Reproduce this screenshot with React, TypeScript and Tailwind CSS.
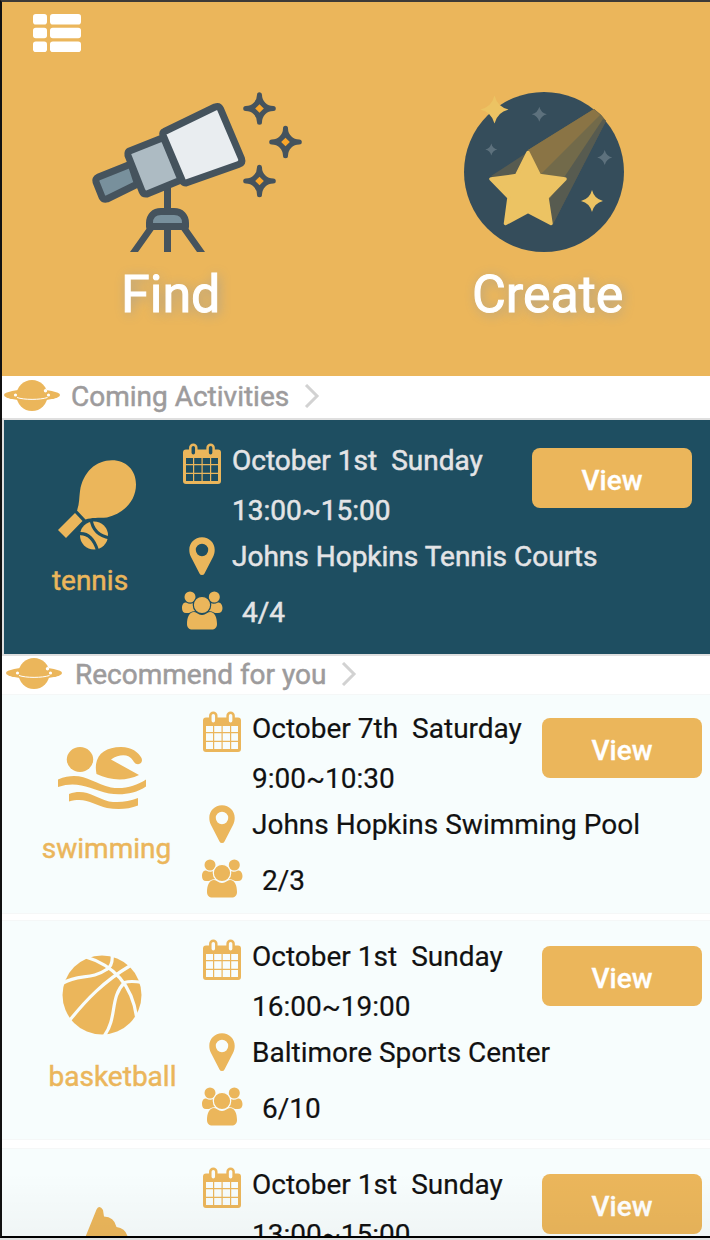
import type { ReactNode } from "react";

type Activity = {
  date: string;
  day: string;
  time: string;
  place?: string;
  count?: string;
};

function MenuIcon() {
  return (
    <svg className="block h-[38px] w-12 fill-white" viewBox="0 0 48 38">
      {[0, 13.8, 27.5].map((y) => (
        <g key={y}>
          <rect x="0" y={y} width="14" height="10.5" rx="2.8" />
          <rect x="17" y={y} width="31" height="10.5" rx="2.8" />
        </g>
      ))}
    </svg>
  );
}

function Spark({ x, y }: { x: number; y: number }) {
  return (
    <g transform={`translate(${x} ${y})`}>
      <path
        d="M0-13.800C0-6 -6 0 -13.800 0C-6 0 0 6 0 13.800C0 6 6 0 13.800 0C6 0 0-6 0-13.800Z"
        fill="#45535d"
        stroke="#45535d"
        strokeWidth="5"
        strokeLinejoin="round"
      />
      <path d="M0-4.300L4.300 0L0 4.300L-4.300 0Z" fill="#f9a62b" />
    </g>
  );
}

function TelescopeIcon() {
  return (
    <svg className="block h-[164px] w-[214px] shrink-0" viewBox="90 90 214 164">
      <path d="M147 228H155L138 252H130ZM180 228H188L205 252H197Z" fill="#45535d" />
      <g stroke="#45535d" strokeWidth="7" strokeLinejoin="round">
        <path d="M167.5 184V252" />
        <path d="M149.5 226.5V223C149.5 216 154 211.500 161 211.500H174C181 211.500 185.500 216 185.500 223V226.500Z" fill="#78909c" />
        <path d="M98.500 177L131 164L137.500 184L107 199Q104 200 102 197L96 182Q95 179 98.500 177Z" fill="#78909c" />
        <path d="M129.500 151L163.500 137.500L181 180L147 194Q143.500 194.500 142 191L128 155.500Q127.500 152 129.500 151Z" fill="#adbbc3" />
        <path d="M164.500 131.500L215 107Q219 105.500 220.500 109L241.500 158.500Q243 163 238.500 164.500L186 183Q183.500 183 182.500 181L163 135Q162 132.500 164.500 131.500Z" fill="#e9edf0" />
      </g>
      <Spark x={259.500} y={108.500} />
      <Spark x={285.500} y={142} />
      <Spark x={259.500} y={181} />
    </svg>
  );
}

function TinyStar({ x, y, r, fill }: { x: number; y: number; r: number; fill: string }) {
  return (
    <path
      transform={`translate(${x} ${y}) scale(${r})`}
      d="M0-1Q.2-.2 1 0Q.2.2 0 1Q-.2.2-1 0Q-.2-.2 0-1Z"
      fill={fill}
    />
  );
}

function ShootingStarIcon() {
  return (
    <svg className="block size-40 shrink-0" viewBox="464 92 160 160">
      <circle cx="544" cy="172" r="80" fill="#354d5b" />
      <path d="M491 176L594 109Q601 114 606 121L553 224Z" fill="#575b50" />
      <path d="M528 150L594 109Q601 114 606 121L550 202Z" fill="#726a4a" />
      <path d="M541 174L528 150L594 109L600 115Z" fill="#8a7445" />
      <path d="M553 224L549 200L603 119L606 121Z" fill="#575b50" />
      <path
        d="M528 152.500L539.500 175.500L565 179L547 197.500L551 223.500L528 211.500L505.500 223.500L509 197.500L491 179L516.500 175.500Z"
        fill="#ecc363"
        stroke="#ecc363"
        strokeWidth="3.500"
        strokeLinejoin="round"
      />
      <TinyStar x={494.500} y={109.500} r={14} fill="#ecc363" />
      <TinyStar x={592} y={201} r={11} fill="#ecc363" />
      <TinyStar x={539.300} y={114.300} r={7.500} fill="#5d717d" />
      <TinyStar x={491.300} y={149.500} r={6} fill="#5d717d" />
      <TinyStar x={604.700} y={157.500} r={7.500} fill="#5d717d" />
    </svg>
  );
}

function PlanetIcon() {
  return (
    <svg className="block h-8 w-14" viewBox="0 0 56 32">
      <ellipse cx="28" cy="15" rx="28" ry="5.800" fill="#ebb65b" />
      <circle cx="28" cy="15.500" r="15.500" fill="#ebb65b" />
      <path d="M13 17.500C20 20 36 20 43.500 17.500" fill="none" stroke="#fff" strokeWidth="1" />
      <g fill="#fff">
        <circle cx="11.500" cy="15" r="1.600" />
        <circle cx="44.500" cy="15" r="1.600" />
        <circle cx="41.500" cy="10.800" r="1.700" />
        <circle cx="42.500" cy="8.300" r=".8" />
      </g>
    </svg>
  );
}

function SectionHeader({ title, className, titleClass }: { title: string; className: string; titleClass: string }) {
  return (
    <div className={`flex items-center bg-white ${className}`}>
      <PlanetIcon />
      <h2 className={`pt-0.5 text-[28px] leading-8 text-[#9d9b9c] [-webkit-text-stroke:0.5px_#9d9b9c] ${titleClass}`}>{title}</h2>
      <svg className="ml-[15px] block h-6 w-4 fill-none stroke-[#d2d2d2] stroke-3" viewBox="0 0 16 24">
        <path d="M2 1L13 12L2 23" />
      </svg>
    </div>
  );
}

function CalendarIcon() {
  return (
    <svg className="block h-[50px] w-[42px] shrink-0" viewBox="181 435 42 50">
      <path
        fillRule="evenodd"
        fill="#ebb65b"
        d="M186 449.500H218Q221 449.500 221 452.500V481Q221 484 218 484H186Q183 484 183 481V452.500Q183 449.500 186 449.500ZM186 458V464H193V458ZM194.200 458V464H201.500V458ZM202.700 458V464H210V458ZM211.200 458V464H218V458ZM186 465.300V472.800H193V465.300ZM194.200 465.300V472.800H201.500V465.300ZM202.700 465.300V472.800H210V465.300ZM211.200 465.300V472.800H218V465.300ZM186 474V481H193V474ZM194.200 474V481H201.500V474ZM202.700 474V481H210V474ZM211.200 474V481H218V474Z"
      />
      <rect x="190.300" y="444.800" width="6" height="11" rx="3" className="fill-(--card)" stroke="#ebb65b" strokeWidth="2.500" />
      <rect x="207.600" y="444.800" width="6" height="11" rx="3" className="fill-(--card)" stroke="#ebb65b" strokeWidth="2.500" />
    </svg>
  );
}

function PinIcon() {
  return (
    <svg className="block h-[42px] w-[42px] shrink-0" viewBox="181 535 42 42">
      <path
        fillRule="evenodd"
        fill="#ebb65b"
        d="M202 537.300C209.300 537.300 214.700 543 214.700 549.800C214.700 552.500 214.200 554.500 213 557L204.500 573.500Q203.800 575 202 575Q200.200 575 199.500 573.500L191 557C189.800 554.500 189.300 552.500 189.300 549.800C189.300 543 194.700 537.300 202 537.300ZM202 543.800A6.200 6.200 0 1 0 202 556.200A6.200 6.200 0 1 0 202 543.800Z"
      />
    </svg>
  );
}

function PeopleIcon() {
  return (
    <svg className="block h-[70px] w-[42px] shrink-0 fill-[#ebb65b]" viewBox="181 577 42 70">
      <circle cx="190" cy="597" r="5.500" />
      <circle cx="214.300" cy="597" r="5.500" />
      <path d="M186 602.500Q190 604.800 193.500 603C193 606.500 194 609 196 611Q192 611 189 613H186Q182 613 182 608C182 605.500 183 602 186 602.500Z" />
      <path d="M218 602.500Q214 604.800 210.500 603C211 606.500 210 609 208 611Q212 611 215 613H218Q222.500 613 222.500 608C222.500 605.500 221 602 218 602.500Z" />
      <path d="M194 612C197 612 198 615 202 615S207 612 210 612C215 612 217 618 217 624C217 627.500 215 629.500 211.500 629.500H192.500C189 629.500 187 627.500 187 624C187 618 189 612 194 612Z" />
      <circle cx="202" cy="605" r="8.700" className="stroke-(--card)" strokeWidth="1.200" />
    </svg>
  );
}

function TennisIcon() {
  return (
    <svg className="block h-[90px] w-20" viewBox="57 460 80 90">
      <path
        fill="#ebb65b"
        d="M77 510.500C79.500 504 79 498 80 491C83 472 96 460.300 112 460.300C126 460.300 136 470 136 484.500C136 500 125 513 107 517.500C98 518 92 517.500 85.500 519.500ZM75 513L82.500 521L66 538L58 530Z"
      />
      <circle cx="94" cy="535.500" r="14" fill="#ebb65b" />
      <path d="M77 534Q92 531 98 552M91 519Q93 535 110 538" fill="none" stroke="#1e4e61" strokeWidth="3" />
    </svg>
  );
}

function SwimmingIcon() {
  return (
    <svg className="block h-[64px] w-[88px]" viewBox="58 746 88 64">
      <g fill="#ebb65b">
        <ellipse cx="80" cy="759.500" rx="13.200" ry="12.500" />
        <path d="M96.500 774C93 757 103 747 121 747C132 747 138 752 141.500 758C144 764 136 767 133 760.500C129 754 120 753.500 111 759.500L139 775C126 781.500 110 780.500 96.500 774Z" />
        <path d="M58 779.500C82 770 91 783 111 787.500C124 789.500 136 786 146 779.500V786.500C135 794 121 795.500 109 793.500C90 789 78 780 58 787Z" />
        <path d="M69 794C86 788 95 798 109 801.500Q124 803.500 138 798V805.500Q124 811 107 808C94 805 86 796.500 69 801.500Z" />
      </g>
    </svg>
  );
}

function BasketballIcon() {
  return (
    <svg className="block size-20" viewBox="61.500 955.500 80 80">
      <circle cx="101.500" cy="995.500" r="39.500" fill="#ebb65b" />
      <g fill="none" stroke="#f7fdfd" strokeWidth="3.200">
        <path d="M84 957C111 965 131 983 136 1017" />
        <path d="M69 1021C86 1000 103 982 130 966" />
        <path d="M62 984C78 974 90 981 106 970Q113 966 111.500 954" />
        <path d="M104 1036C117 1018 109 998 124 983Q130 981 142 983" />
      </g>
    </svg>
  );
}

function ClimbingIcon() {
  return (
    <svg className="block h-[80px] w-[80px]" viewBox="61 1183 80 80">
      <path
        fill="#ebb65b"
        d="M85 1238L96.500 1209.500Q99.500 1204.500 103 1210L104 1216.500Q114 1216.500 116.500 1227Q126 1228 128 1238L134 1263H76Z"
      />
    </svg>
  );
}

function ViewButton({ className }: { className: string }) {
  return (
    <button
      className={`h-[60px] w-40 shrink-0 rounded-lg bg-[#ebb65b] pt-1.5 text-[28px] leading-8 font-medium text-white [-webkit-text-stroke:0.3px_#fff] ${className}`}
    >
      View
    </button>
  );
}

function Details({ item }: { item: Activity }) {
  return (
    <div className="w-0 grow text-[28px] leading-8 whitespace-nowrap">
      <div className="flex h-[50px] items-center">
        <CalendarIcon />
        <span className="mt-0.5 ml-[9px]">{item.date}</span>
        <span className="mt-0.5 ml-[14px]">{item.day}</span>
      </div>
      <div className="flex h-[50px] items-center pt-0.5 pl-[51px]">{item.time}</div>
      {item.place && (
        <div className="flex h-[42px] items-center">
          <PinIcon />
          <span className="mt-0.5 ml-[9px]">{item.place}</span>
        </div>
      )}
      {item.count && (
        <div className="flex h-[70px] items-center">
          <PeopleIcon />
          <span className="mt-0.5 ml-[19px]">{item.count}</span>
        </div>
      )}
    </div>
  );
}

function Sport({ name, icon, className, iconBox }: { name?: string; icon: ReactNode; className: string; iconBox: string }) {
  return (
    <div className={`flex shrink-0 flex-col items-center text-[#ebb65b] ${className}`}>
      <div className={iconBox}>{icon}</div>
      {name && <span className="mt-px text-[28px] leading-8 [-webkit-text-stroke:0.5px_#ebb65b]">{name}</span>}
    </div>
  );
}

const recommended: {
  id: string;
  name?: string;
  icon: ReactNode;
  card: string;
  sport: string;
  iconBox: string;
  item: Activity;
}[] = [
  {
    id: "swimming",
    name: "swimming",
    icon: <SwimmingIcon />,
    card: "h-[220px] pt-2 mb-1.5",
    sport: "-mr-px w-[200px] pl-[9px]",
    iconBox: "h-[129px] pt-[43px] pr-[9px]",
    item: { date: "October 7th", day: "Saturday", time: "9:00~10:30", place: "Johns Hopkins Swimming Pool", count: "2/3" },
  },
  {
    id: "basketball",
    name: "basketball",
    icon: <BasketballIcon />,
    card: "h-[220px] pt-2.5 mb-2",
    sport: "-mr-px w-[200px] pl-[21px]",
    iconBox: "h-[129px] pt-6 pr-[22px]",
    item: { date: "October 1st", day: "Sunday", time: "16:00~19:00", place: "Baltimore Sports Center", count: "6/10" },
  },
  {
    id: "climbing",
    icon: <ClimbingIcon />,
    card: "h-[220px] pt-2.5",
    sport: "-mr-px w-[200px] pl-[21px]",
    iconBox: "h-[129px] pt-6 pr-[23px]",
    item: { date: "October 1st", day: "Sunday", time: "13:00~15:00" },
  },
];

export default function App() {
  return (
    <div className="h-[1240px] w-[710px] bg-[#dfe1e1] font-['Roboto',sans-serif]">
      <main className="relative h-[1238px] overflow-hidden border-t-2 border-b-2 border-l-2 border-t-[#3d3a38] border-b-black border-l-[#111] bg-white">
        <header className="h-[374px] bg-[#ebb65b] pt-3 pl-[31px]">
          <MenuIcon />
          <div className="mt-[38px] flex text-[52px] leading-[62px] text-white [-webkit-text-stroke:1px_#fff] [text-shadow:2px_2px_12px_#a8a08f]">
            <div className="ml-[57px] flex w-[214px] flex-col">
              <TelescopeIcon />
              <span className="mt-2.5 pl-[31px]">Find</span>
            </div>
            <div className="ml-[160px] flex w-40 flex-col pt-0.5">
              <ShootingStarIcon />
              <span className="mt-3 pl-2">Create</span>
            </div>
          </div>
        </header>

        <SectionHeader title="Coming Activities" className="h-[42px] pb-0.5 pl-0.5" titleClass="ml-[11px]" />

        <section className="flex h-[238px] border-y-2 border-l-2 border-[#dfdfdf] bg-[#1e4e61] pt-[15px] text-[#e4e4e6] [--card:#1e4e61] [-webkit-text-stroke:0.5px_#e4e4e6]">
          <Sport name="tennis" icon={<TennisIcon />} className="w-[177px] pr-[5px]" iconBox="h-[129px] pt-[25px] pl-[14px]" />
          <Details item={{ date: "October 1st", day: "Sunday", time: "13:00~15:00", place: "Johns Hopkins Tennis Courts", count: "4/4" }} />
          <ViewButton className="mt-[13px] mr-[18px]" />
        </section>

        <SectionHeader title="Recommend for you" className="h-[38px] pb-0.5 pl-1" titleClass="ml-[13px]" />

        {recommended.map((r) => (
          <article
            key={r.id}
            className={`flex border-y border-[#f5f7f7] bg-[#f7fdfd] text-[#111] [--card:#f7fdfd] [-webkit-text-stroke:0.2px_#111] ${r.card}`}
          >
            <Sport name={r.name} icon={r.icon} className={r.sport} iconBox={r.iconBox} />
            <Details item={r.item} />
            <ViewButton className="mt-[15px] mr-2" />
          </article>
        ))}

        <div className="pointer-events-none absolute inset-x-0 bottom-0 h-16 bg-linear-to-b from-transparent to-black/3" />
      </main>
    </div>
  );
}
